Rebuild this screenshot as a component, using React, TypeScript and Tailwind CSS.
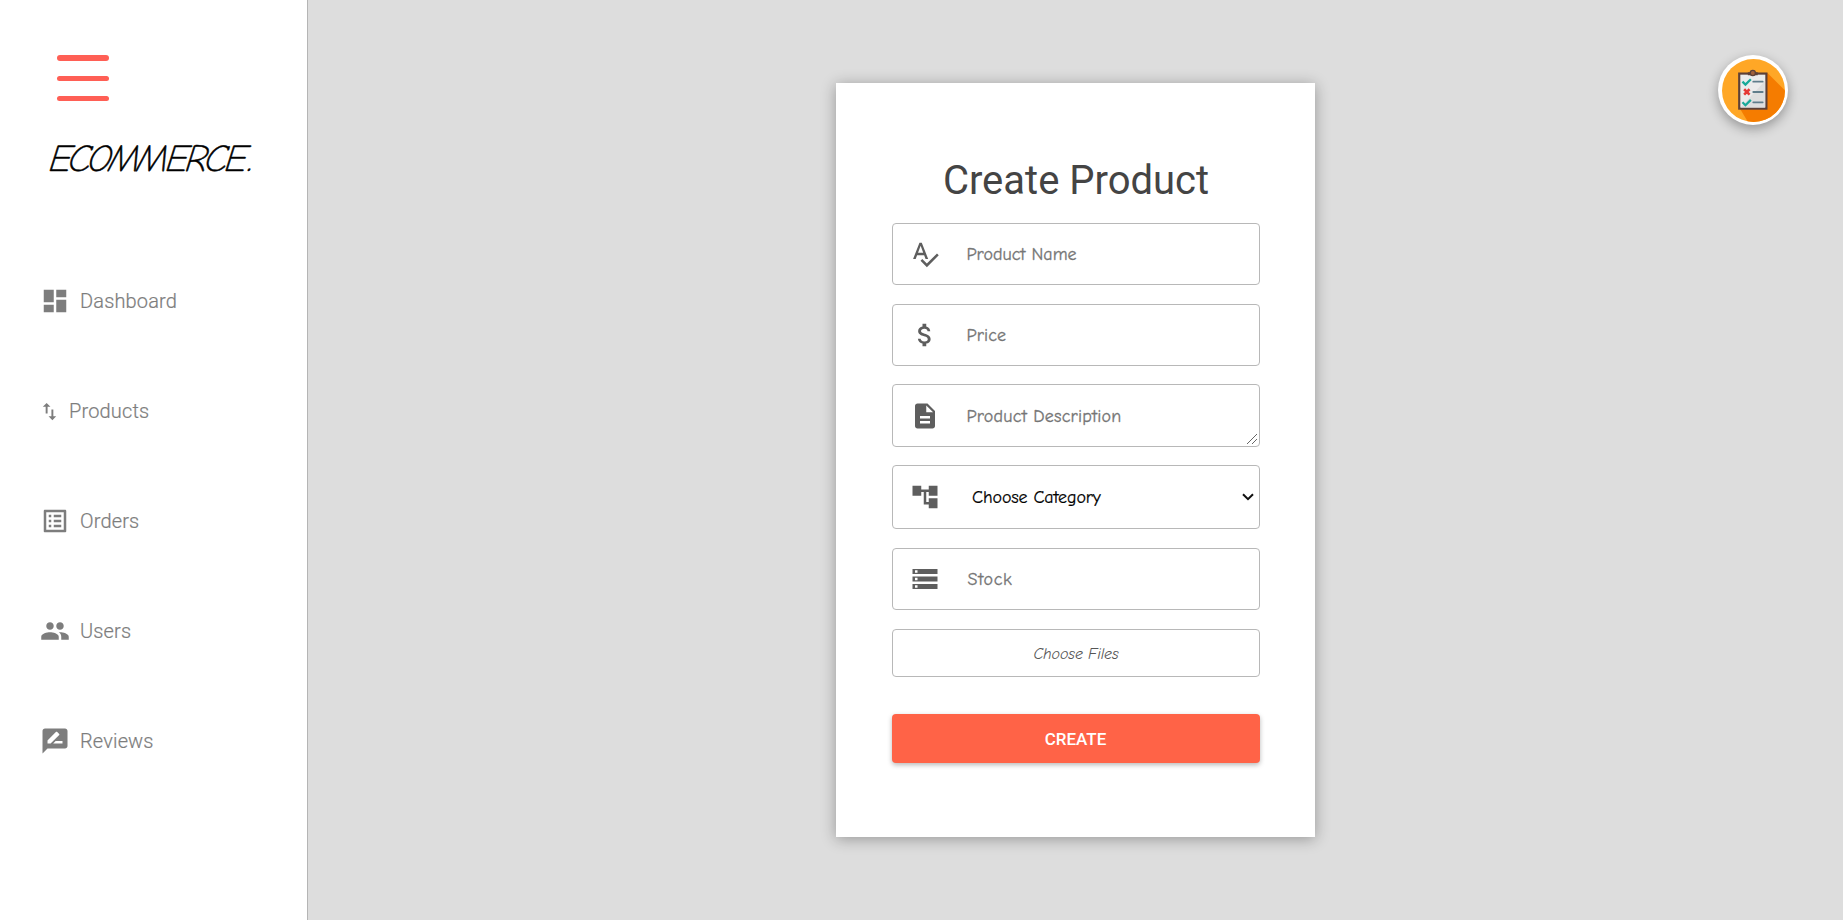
import type { ReactNode } from "react";
import {
  MdAccountTree,
  MdAttachMoney,
  MdDashboard,
  MdDescription,
  MdImportExport,
  MdListAlt,
  MdPeople,
  MdRateReview,
  MdSpellcheck,
  MdStorage,
} from "react-icons/md";

const handFont = "font-['Comic_Neue','Comic_Sans_MS',Lato,sans-serif]";

function NavItem({ icon, label, small = false }: { icon: ReactNode; label: string; small?: boolean }) {
  return (
    <a className={`flex h-[110px] items-center ${small ? "gap-[8px] pl-[38px]" : "gap-[10px] pl-[40px]"}`}>
      {icon}
      <span className="text-[20px] leading-[30px] font-light tracking-[0.15px] [-webkit-text-stroke:0.2px_#7d7d7d]">{label}</span>
    </a>
  );
}

function Sidebar() {
  return (
    <aside className="flex h-full w-[308px] shrink-0 flex-col border-r border-[#b5b5b5] bg-white text-[#7d7d7d]">
      <div className="mt-[55px] ml-[57px] flex w-[52px] flex-col">
        <span className="h-[6px] rounded-full bg-[#ff5f55]" />
        <span className="mt-[15px] h-[5px] rounded-full bg-[#ff5f55]" />
        <span className="mt-[15px] h-[5px] rounded-full bg-[#ff5f55]" />
      </div>
      <div className="mt-[37px] ml-[49px] flex h-[42px] items-center">
        <span
          className={`${handFont} origin-left [transform:skewX(-6deg)_scaleX(0.975)] text-[38px] leading-[42px] font-light tracking-[-3.1px] whitespace-nowrap text-black italic [-webkit-text-stroke:0.5px_black]`}
        >
          ECOMMERCE<span className="ml-[5px]">.</span>
        </span>
      </div>
      <nav className="mt-[66px] flex flex-col">
        <NavItem icon={<MdDashboard size={30} />} label="Dashboard" />
        <NavItem small icon={<MdImportExport size={23} />} label="Products" />
        <NavItem icon={<MdListAlt size={30} />} label="Orders" />
        <NavItem icon={<MdPeople size={30} />} label="Users" />
        <NavItem icon={<MdRateReview size={30} />} label="Reviews" />
      </nav>
    </aside>
  );
}

function Field({ icon, label, box, text, children }: { icon: ReactNode; label: string; box: string; text: string; children?: ReactNode }) {
  return (
    <div className={`relative flex items-center rounded-[4px] border border-[#b8b8b8] pl-[17px] text-[#5e5e5e] ${box}`}>
      {icon}
      <span className={`${handFont} pt-[2px] text-[18px] leading-6 ${text}`}>{label}</span>
      {children}
    </div>
  );
}

function ChecklistBadge() {
  return (
    <svg viewBox="0 0 64 64" className="size-full">
      <defs>
        <clipPath id="disc">
          <circle cx="32" cy="32" r="32" />
        </clipPath>
      </defs>
      <g clipPath="url(#disc)">
        <rect width="64" height="64" fill="#ffa726" />
        <path d="M46 14L78 46V80H36L18 50Z" fill="#f57c00" />
      </g>
      <g transform="translate(-0.7 0)">
        <rect x="18.2" y="14.8" width="27.6" height="35.6" fill="#ebebeb" stroke="#5d4037" strokeWidth="2.2" />
        <path d="M19.5 49.2L44.5 22V49.2Z" fill="#dedede" />
        <path d="M27 16.500v-3h3a2.400 2.400 0 0 1 4 0h3v3z" fill="#5d4037" />
        <circle cx="32" cy="14.2" r="2.6" fill="#a1603c" stroke="#5d4037" strokeWidth="1.3" />
        <path d="M21.500 23l3 3 5.500-5.500M21.500 44l3 3 5.500-5.500" fill="none" stroke="#18a999" strokeWidth="2.3" />
        <path d="M23.200 30.700l5.500 5.500M28.700 30.700l-5.500 5.500" stroke="#e53935" strokeWidth="2.6" />
        <path d="M32.500 23h9.500M32.500 33.500h9.500M32.500 44h9.500" stroke="#607d8b" strokeWidth="1.900" strokeLinecap="round" />
      </g>
    </svg>
  );
}

export default function App() {
  return (
    <div className="relative flex h-[920px] w-full overflow-hidden bg-[#dddddd] font-['Roboto',sans-serif]">
      <Sidebar />
      <main className="flex flex-1 items-center justify-center">
        <form className="flex h-[754px] w-[479px] flex-col bg-white pt-[68px] pr-[55px] pl-[56px] shadow-[0_2px_14px_rgba(0,0,0,0.32)]">
          <h1 className="h-[60px] text-center text-[40px] leading-[60px] text-[#444444]">Create Product</h1>
          <Field icon={<MdSpellcheck size={30} />} label="Product Name" box="mt-[12px] h-[62px]" text="ml-[26.5px] text-[#757575] [-webkit-text-stroke:0.3px_#757575]" />
          <Field icon={<MdAttachMoney size={30} />} label="Price" box="mt-[19px] h-[62px]" text="ml-[26.5px] text-[#757575] tracking-[0.15px] [-webkit-text-stroke:0.3px_#757575]" />
          <Field icon={<MdDescription size={30} />} label="Product Description" box="mt-[18px] h-[63px]" text="ml-[26.5px] text-[#757575] tracking-[0.22px] [-webkit-text-stroke:0.3px_#757575]">
            <svg viewBox="0 0 10 10" className="absolute right-[2px] bottom-[2px] size-[10px]" stroke="#555" strokeWidth="0.9">
              <path d="M0 10L10 0M5 10L10 5" />
            </svg>
          </Field>
          <Field icon={<MdAccountTree size={30} />} label="Choose Category" box="mt-[18px] h-[64px]" text="ml-[32px] text-black tracking-[-0.1px] [-webkit-text-stroke:0.2px_black]">
            <svg viewBox="0 0 12 8" className="absolute right-[5px] h-[8px] w-[12px]" fill="none" stroke="#101010" strokeWidth="2">
              <path d="M1 1.200L6 6.200L11 1.200" />
            </svg>
          </Field>
          <Field icon={<MdStorage size={30} />} label="Stock" box="mt-[19px] h-[62px]" text="ml-[27.5px] text-[#757575] tracking-[0.7px] [-webkit-text-stroke:0.3px_#757575]" />
          <div className={`${handFont} mt-[19px] flex h-[48px] items-center justify-center rounded-[4px] border border-[#b8b8b8] pt-[2px] text-[16px] tracking-[-0.1px] text-[#555555] italic`}>
            Choose Files
          </div>
          <button
            type="button"
            className="mt-[37px] h-[49px] rounded-[4px] bg-[#ff6347] pt-[2px] pr-[1px] text-[17px] font-medium text-white shadow-[0_2px_5px_rgba(0,0,0,0.28)]"
          >
            CREATE
          </button>
        </form>
      </main>
      <div className="absolute top-[55px] left-[1718px] size-[70px] rounded-full bg-white p-[3.5px] shadow-[0_4px_12px_rgba(0,0,0,0.33)]">
        <ChecklistBadge />
      </div>
    </div>
  );
}
